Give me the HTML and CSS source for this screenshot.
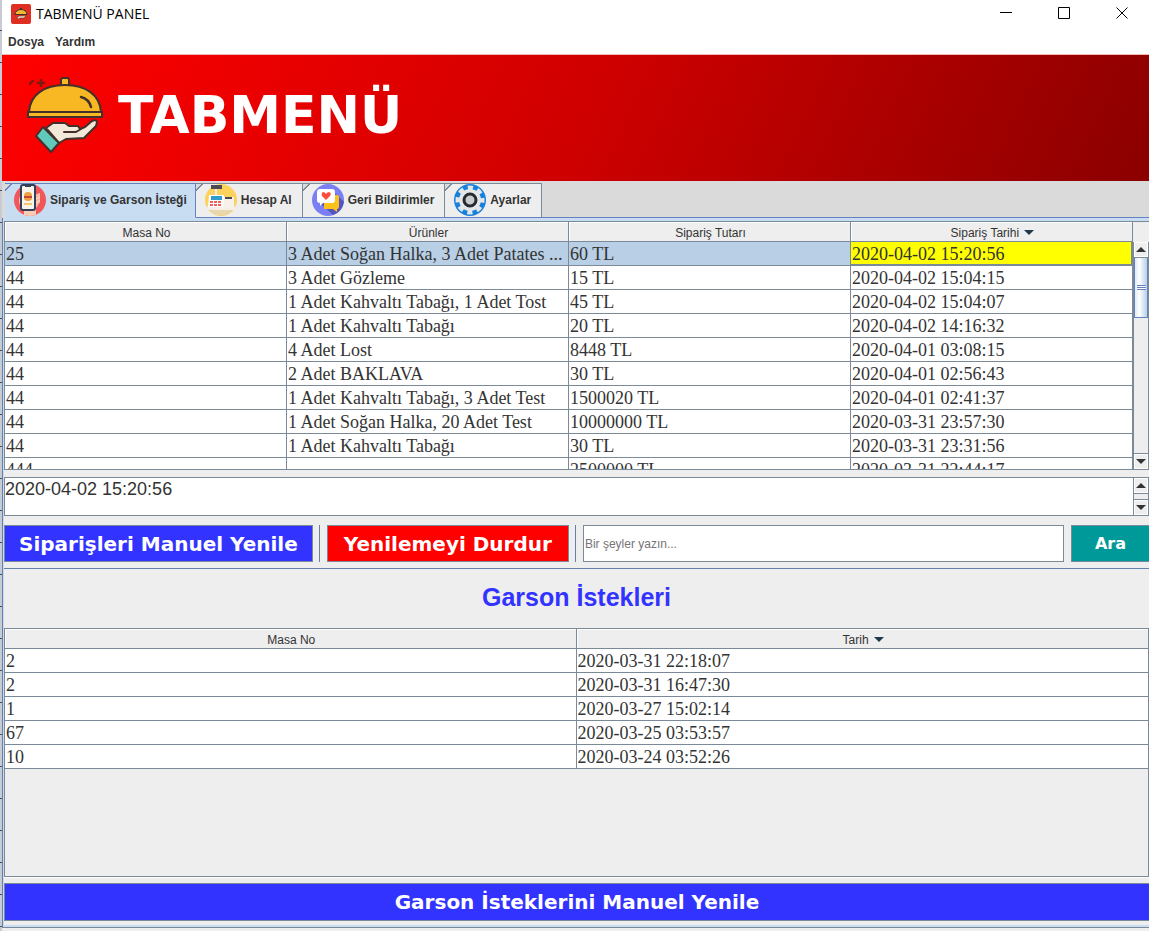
FILE: index.html
```html
<!DOCTYPE html>
<html lang="tr">
<head>
<meta charset="utf-8">
<title>TABMENÜ PANEL</title>
<link rel="stylesheet" href="styles.css">
</head>
<body>
<div class="window">
  <header class="titlebar">
    <svg class="app-icon" viewBox="0 0 20 20" aria-hidden="true">
      <rect width="20" height="20" rx="2" fill="#df2f22"/>
      <path d="M4 10.500a6 5 0 0 1 12 0z" fill="#f2b632" stroke="#43302a" stroke-width="1"/>
      <rect x="9" y="4" width="2" height="2" fill="#43302a"/>
      <path d="M6 14l2-2h4l3-1-2 3H9l-2 1z" fill="#f3e6d5" stroke="#43302a" stroke-width=".5"/>
    </svg>
    <h1 class="title">TABMENÜ PANEL</h1>
    <div class="controls">
      <button class="control" aria-label="Simge durumuna küçült"><svg viewBox="0 0 12 12"><path d="M0 5.500H12"/></svg></button>
      <button class="control" aria-label="Ekranı kapla"><svg viewBox="0 0 12 12"><path d="M.5.5h11v11H.5z"/></svg></button>
      <button class="control" aria-label="Kapat"><svg viewBox="0 0 12 12"><path d="M.5.5l11 11M11.500.5L.5 11.500"/></svg></button>
    </div>
  </header>
  <nav class="menubar">
    <button class="menu">Dosya</button>
    <button class="menu">Yardım</button>
  </nav>
  <div class="banner">
    <svg class="logo" viewBox="0 0 78 78" aria-hidden="true">
      <g stroke="#43302a" stroke-width="2" stroke-linejoin="round" stroke-linecap="round">
        <path d="M35 9V4q0-2 2-2h4q2 0 2 2v5" fill="#f7b824"/>
        <path d="M3 36C4 19 18 9 39 9s35 10 36 27z" fill="#f7b824"/>
        <path d="M2 36h74v5H2z" fill="#f7b824"/>
        <path d="M55 21q8 2 10 10" fill="none" stroke-width="2.500"/>
        <path d="M4 8q1-2 3-3M12 7h6M15 4v6" fill="none" stroke="#7c1a12" stroke-width="2.500"/>
        <path d="M20 52l7-5h12l4 3h9l2 3 5-2 7-6q4-2 5 1l-1 4-12 12-18 1-7 4z" fill="#f3e9d8"/>
        <path d="M38 56h12l5-3" fill="none"/>
        <path d="M17 51L33 67l-8 9L10 60z" fill="#5fc9bb"/>
      </g>
    </svg>
    <span class="brand">TABMENÜ</span>
  </div>

  <div class="tabs" role="tablist">
    <button class="tab active" role="tab" aria-selected="true">
      <svg viewBox="0 0 32 32" aria-hidden="true"><circle cx="16" cy="16" r="16" fill="#f1565b"/><path d="M8 11q-3 1-3 6 0 5 5 8v6q6 2 12 0v-7l4-6V9l-5 2z" fill="#fbcbb3"/><rect x="7" y="1" width="14" height="25" rx="2" fill="#f8f3ea" stroke="#333e5b" stroke-width="2"/><path d="M11 0h6v3h-6z" fill="#333e5b"/><path d="M10 12q0-4 4-4t4 4z" fill="#efa13d"/><path d="M10 12h8v2h-8z" fill="#c8443c"/><path d="M10 14h8q0 3-4 3t-4-3z" fill="#efa13d"/><rect x="10" y="19" width="8" height="2" fill="#f4c86a"/><path d="M22 13l3-2M22 17l3-2M22 21l3-2" stroke="#f2a38c"/></svg>
      Sipariş ve Garson İsteği
    </button>
    <button class="tab" role="tab" aria-selected="false">
      <svg viewBox="0 0 32 32" aria-hidden="true"><circle cx="16" cy="16" r="16" fill="#fcd25c"/><path d="M1 21h30a16 16 0 0 1-30 0z" fill="#e7d6af"/><rect x="6" y="1" width="11" height="4" fill="#4b4b55"/><path d="M11 5v6" stroke="#eee" stroke-width="2"/><path d="M4 11h15v13H3z" fill="#fff"/><path d="M19 13h10v11H19z" fill="#f7f1ea"/><rect x="6" y="12" width="11" height="4" fill="#2d9dce"/><path d="M5 18h12M5 21h12" stroke="#ee6259" stroke-width="2" stroke-dasharray="3 1"/><path d="M20 14h7" stroke="#4b4b55" stroke-width="2"/><rect x="2" y="23" width="28" height="3" fill="#f5efe6"/></svg>
      Hesap Al
    </button>
    <button class="tab" role="tab" aria-selected="false">
      <svg viewBox="0 0 32 32" aria-hidden="true"><circle cx="16" cy="16" r="16" fill="#7a80f3"/><path d="M7 18l14 13q9-3 11-13l-8-8z" fill="#5655ba"/><path d="M12 11h13q2 0 2 2v10q0 2-2 2v3l-4-3h-9z" fill="#fcc21b"/><path d="M8 5h12q3 0 3 3v8q0 3-3 3h-9l-3 3v-3q-3 0-3-3V8q0-3 3-3z" fill="#fff"/><path d="M14 16l-4-4q-1-3 1-4 2 0 3 2 1-2 3-2 3 1 1 4z" fill="#ff4c3b"/></svg>
      Geri Bildirimler
    </button>
    <button class="tab" role="tab" aria-selected="false">
      <svg viewBox="0 0 32 32" aria-hidden="true"><circle cx="16" cy="16" r="16" fill="#1681dc"/><circle cx="16" cy="16" r="11" fill="#e4e6e8"/><circle cx="16" cy="16" r="12" fill="none" stroke="#e4e6e8" stroke-width="5" stroke-dasharray="5 4.425" stroke-dashoffset="2.500"/><circle cx="16" cy="16" r="6" fill="#c9cbcd" stroke="#272b31" stroke-width="3"/></svg>
      Ayarlar
    </button>
    <span class="tab-rest"></span>
  </div>

  <main class="pane">
    <section class="orders">
      <div class="orders-view">
        <table class="grid">
          <thead><tr><th>Masa No</th><th>Ürünler</th><th>Sipariş Tutarı</th><th>Sipariş Tarihi <i class="sort"></i></th></tr></thead>
          <tbody>
            <tr class="selected"><td>25</td><td>3 Adet Soğan Halka, 3 Adet Patates ...</td><td>60 TL</td><td class="focus">2020-04-02 15:20:56</td></tr>
            <tr><td>44</td><td>3 Adet Gözleme</td><td>15 TL</td><td>2020-04-02 15:04:15</td></tr>
            <tr><td>44</td><td>1 Adet Kahvaltı Tabağı, 1 Adet Tost</td><td>45 TL</td><td>2020-04-02 15:04:07</td></tr>
            <tr><td>44</td><td>1 Adet Kahvaltı Tabağı</td><td>20 TL</td><td>2020-04-02 14:16:32</td></tr>
            <tr><td>44</td><td>4 Adet Lost</td><td>8448 TL</td><td>2020-04-01 03:08:15</td></tr>
            <tr><td>44</td><td>2 Adet BAKLAVA</td><td>30 TL</td><td>2020-04-01 02:56:43</td></tr>
            <tr><td>44</td><td>1 Adet Kahvaltı Tabağı, 3 Adet Test</td><td>1500020 TL</td><td>2020-04-01 02:41:37</td></tr>
            <tr><td>44</td><td>1 Adet Soğan Halka, 20 Adet Test</td><td>10000000 TL</td><td>2020-03-31 23:57:30</td></tr>
            <tr><td>44</td><td>1 Adet Kahvaltı Tabağı</td><td>30 TL</td><td>2020-03-31 23:31:56</td></tr>
            <tr><td>444</td><td></td><td>2500000 TL</td><td>2020-03-31 22:44:17</td></tr>
          </tbody>
        </table>
      </div>
      <div class="scroll below-head">
        <button class="arrow" aria-label="Yukarı"><i class="up"></i></button>
        <div class="track"><div class="thumb"></div></div>
        <button class="arrow" aria-label="Aşağı"><i class="down"></i></button>
      </div>
    </section>

    <div class="detail">
      <textarea class="detail-text" aria-label="Sipariş ayrıntısı">2020-04-02 15:20:56</textarea>
      <div class="scroll">
        <button class="arrow" aria-label="Yukarı"><i class="up"></i></button>
        <div class="track"></div>
        <button class="arrow" aria-label="Aşağı"><i class="down"></i></button>
      </div>
    </div>

    <div class="toolbar">
      <button class="action refresh">Siparişleri Manuel Yenile</button>
      <span class="divider"></span>
      <button class="action stop">Yenilemeyi Durdur</button>
      <span class="divider"></span>
      <input class="search" type="text" placeholder="Bir şeyler yazın..." aria-label="Ara">
      <button class="action find">Ara</button>
    </div>

    <h2 class="heading">Garson İstekleri</h2>

    <section class="requests">
      <table class="grid">
        <thead><tr><th>Masa No</th><th>Tarih <i class="sort"></i></th></tr></thead>
        <tbody>
          <tr><td>2</td><td>2020-03-31 22:18:07</td></tr>
          <tr><td>2</td><td>2020-03-31 16:47:30</td></tr>
          <tr><td>1</td><td>2020-03-27 15:02:14</td></tr>
          <tr><td>67</td><td>2020-03-25 03:53:57</td></tr>
          <tr><td>10</td><td>2020-03-24 03:52:26</td></tr>
        </tbody>
      </table>
    </section>
    <button class="action refresh wide">Garson İsteklerini Manuel Yenile</button>
  </main>
</div>
</body>
</html>
```
FILE: styles.css
```css
* { box-sizing: border-box; }

body {
  margin: 0;
  background: repeating-linear-gradient(#c9cbd3 0 30px, #4a4d5c 30px 31px, #c9cbd3 31px 32px);
  color: #333;
  font: 12px "Liberation Sans", Arial, sans-serif;
}

button, input, textarea { font: inherit; color: inherit; border-radius: 0; margin: 0; }

.window {
  display: flex;
  flex-direction: column;
  min-height: 100vh;
  margin-left: 2px;
  padding-bottom: 3px;
  background: #eee;
}

/* Title bar */
.titlebar { display: flex; align-items: center; height: 28px; padding-left: 9px; background: #fff; }
.app-icon { width: 20px; height: 20px; }
.title { margin: 0 auto 0 5px; padding-bottom: 2px; font: 14px "Open Sans", "Noto Sans", sans-serif; color: #000; }
.controls { display: flex; margin-right: -3px; }
.control { display: grid; place-items: center; width: 58px; height: 28px; padding: 0 2px 2px 0; border: 0; background: none; }
.control svg { width: 12px; height: 12px; fill: none; stroke: #000; stroke-width: 1; }

/* Menu */
.menubar { display: flex; gap: 11px; height: 27px; padding: 0 6px; background: #fff; border-bottom: 1px solid #f3b8b8; }
.menu { padding: 1px 0 0; border: 0; background: none; font-weight: bold; line-height: 26px; }

/* Banner */
.banner {
  display: flex;
  align-items: center;
  gap: 14px;
  height: 126px;
  padding: 0 24px 6px;
  background: linear-gradient(115deg, #f00, #d00000 50%, #8b0000);
}
.logo { width: 78px; height: 78px; }
.brand { font: bold 52px "DejaVu Sans", sans-serif; color: #fff; }

/* Tabs */
.tabs { display: flex; height: 37px; padding: 2px 0 0 3px; background: #dadada; }
.tab {
  display: flex;
  align-items: center;
  gap: 4px;
  padding: 0 10px 1px 9px;
  border: solid #7a8a99;
  border-width: 1px 1px 1px 0;
  border-bottom-color: #6382bf;
  background: linear-gradient(135deg, #dadada 4px, #7a8a99 4px, #7a8a99 5px, #eee 5px);
  font-weight: bold;
  white-space: nowrap;
}
.tab svg { width: 32px; height: 32px; }
.tab.active {
  padding-right: 8px;
  border-color: #6382bf;
  border-bottom-color: #c8ddf2;
  background: linear-gradient(135deg, #dadada 4px, #6382bf 4px, #6382bf 5px, #c8ddf2 5px);
}
.tab-rest { flex: 1; border-bottom: 1px solid #6382bf; }

/* Pane */
.pane {
  flex: 1;
  display: flex;
  flex-direction: column;
  border-left: 1px solid #6382ab;
  border-bottom: 1px solid #7a8a99;
  padding: 3px 0 6px 1px;
  background: linear-gradient(#c8ddf2 3px, transparent 3px);
  box-shadow: inset 1px 0 #c8ddf2, inset 0 -2px #c8ddf2;
}

.orders { display: flex; height: 249px; border: solid #7a8a99; border-width: 1px 0 1px 1px; }
.orders-view { flex: 1; min-width: 0; overflow: hidden; background: #fff; }

.grid { width: 100%; table-layout: fixed; border-collapse: separate; border-spacing: 0; }
.grid th {
  height: 20px;
  padding: 2px 0 0 2px;
  border: solid #7a8a99;
  border-width: 0 1px 1px 0;
  background: #eee;
  box-shadow: inset 1px 1px #fff;
  font-weight: normal;
}
.grid td {
  height: 24px;
  padding: 0 1px;
  overflow: hidden;
  border: solid #7a8a99;
  border-width: 0 1px 1px 0;
  background: #fff;
  font: 18px/20px "Liberation Serif", "Times New Roman", serif;
  text-overflow: ellipsis;
  white-space: nowrap;
}
.grid .selected td { background: #b8cfe5; }
.grid .selected .focus { background: #ff0; box-shadow: inset -1px -1px #7a8a99; }
.sort { display: inline-block; margin: 0 0 2px 2px; border: solid transparent; border-width: 5px 5px 0; border-top-color: #1f3b4a; }

/* Scroll bars */
.scroll { display: flex; flex-direction: column; width: 16px; border: solid #7a8a99; border-width: 0 1px; background: #eee; }
.below-head { margin-top: 20px; }
.arrow { display: grid; place-items: center; flex: none; height: 15px; padding: 0; border: 1px solid #fff; background: #eee; }
.up, .down { border: solid transparent; }
.up { border-width: 0 5px 5px; border-bottom-color: #333; }
.down { border-width: 5px 5px 0; border-top-color: #333; }
.track { flex: 1; border: solid #7a8a99; border-width: 1px 0; }
.thumb {
  height: 60px;
  border: 1px solid #6382bf;
  border-top: 0;
  background:
    repeating-linear-gradient(#6382bf 0 1px, #fff 1px 2px) center / 9px 5px no-repeat,
    linear-gradient(to right, #dfeaf6, #fff 35%, #b8cfe5);
}

/* Detail text */
.detail { display: flex; height: 39px; margin-top: 7px; border: solid #7a8a99; border-width: 1px 0 1px 1px; background: #fff; }
.detail-text { flex: 1; padding: 0; border: 0; outline: 0; background: none; resize: none; overflow: hidden; font-size: 18px; line-height: 22px; }

/* Buttons and search */
.toolbar { display: flex; height: 53px; padding: 9px 0 6px; border-bottom: 1px solid #6382ab; }
.action {
  border: 1px solid #7a8a99;
  padding: 0 14px;
  color: #fff;
  font: bold 20px "DejaVu Sans", Verdana, sans-serif;
  line-height: 30px;
  white-space: nowrap;
}
.refresh { background: #33f; }
.stop { padding: 0 16px; background: #f00; }
.find { margin-left: 7px; padding: 0 23px; border-right: 0; background: #099; font-size: 16px; }
.divider { width: 1px; margin: 0 7px 0 6px; background: #6382ab; }
.search { flex: 1; min-width: 0; padding: 0 1px; border: 1px solid #7a8a99; background: #fff; }
.search::placeholder { color: #757575; opacity: 1; }

.heading { margin: 0; color: #33f; font-size: 25px; line-height: 56px; text-align: center; }

.requests { flex: 1; margin-top: 3px; border: 1px solid #7a8a99; box-shadow: 0 1px #fff; }
.requests .grid tr > :last-child { border-right: 0; }
.wide { height: 38px; margin-top: 6px; border-right: 0; }
```
